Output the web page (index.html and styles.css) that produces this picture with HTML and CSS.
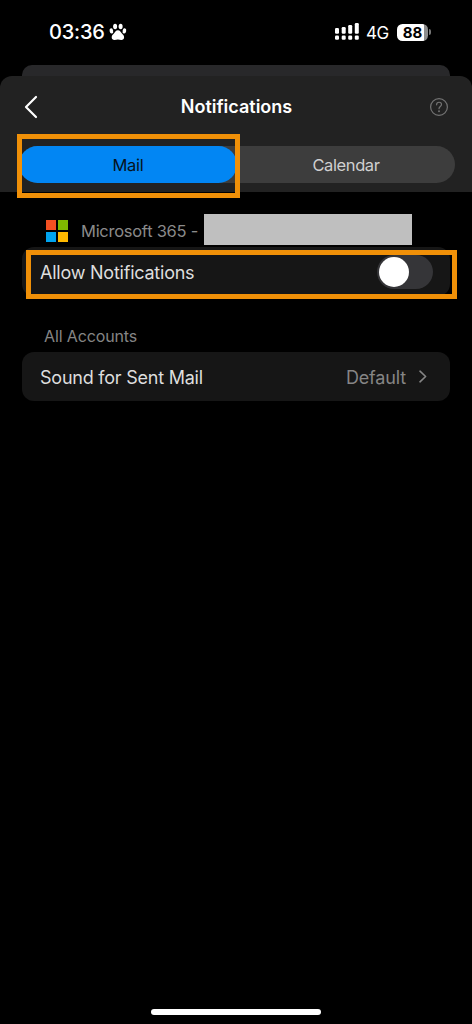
FILE: index.html
```html
<!DOCTYPE html>
<html lang="en">
<head>
<meta charset="utf-8">
<title>Notifications</title>
<link rel="stylesheet" href="styles.css">
</head>
<body>
<div class="phone">
  <div class="status">
    <span class="time">03:36</span>
    <svg class="paw" width="18" height="18" viewBox="0 0 18 18" fill="#fff">
      <ellipse cx="6.1" cy="3.5" rx="2" ry="2.8"/><ellipse cx="11.6" cy="3.5" rx="2" ry="2.8"/>
      <ellipse cx="2.4" cy="7.9" rx="1.8" ry="2.6" transform="rotate(-12 2.4 7.9)"/><ellipse cx="15.4" cy="7.9" rx="1.8" ry="2.6" transform="rotate(12 15.4 7.9)"/>
      <path d="M8.900 7.200c2.100 0 2.700 1.700 3.800 3 1.200 1.300 2.400 2.200 2.400 4 0 1.900-1.300 2.900-2.900 2.800-1.200-.1-2.100-.5-3.300-.5s-2.100.4-3.300.5c-1.600.1-2.900-.9-2.900-2.800 0-1.800 1.200-2.700 2.400-4 1.100-1.300 1.700-3 3.800-3z"/>
    </svg>
    <svg class="signal" width="26" height="18" viewBox="0 0 26 18" fill="#fff">
      <rect x="1" y="5" width="4" height="5.700" rx="1.200"/><rect x="7.700" y="4" width="4" height="6.700" rx="1.200"/><rect x="14.200" y="2" width="4" height="8.700" rx="1.200"/><rect x="20.800" y="0" width="4" height="10.700" rx="1.200"/>
      <rect x="1" y="12.600" width="4" height="4.200" rx="1.200"/><rect x="7.700" y="12.600" width="4" height="4.200" rx="1.200"/><rect x="14.200" y="12.600" width="4" height="4.200" rx="1.200"/><rect x="20.800" y="12.600" width="4" height="4.200" rx="1.200"/>
    </svg>
    <span class="network">4G</span>
    <span class="battery">88</span>
    <span class="battery-tip"></span>
  </div>
  <div class="back-sheet"></div>
  <div class="sheet">
    <div class="header">
      <svg class="back" width="14" height="24" viewBox="0 0 14 24" fill="none" stroke="#fff" stroke-width="2.200" stroke-linecap="round" stroke-linejoin="round"><path d="M12 2 2 12 12 22"/></svg>
      <h1 class="title">Notifications</h1>
      <svg class="help" width="20" height="20" viewBox="0 0 20 20" fill="none" stroke="#737373" stroke-width="1.200" stroke-linecap="round"><circle cx="10" cy="10" r="8.400"/><path d="M7.600 7.800c0-3.400 4.900-3.300 4.900-.3 0 2-2.500 2.100-2.500 4.200"/><circle cx="10" cy="14.300" r=".4" fill="#737373"/></svg>
    </div>
    <div class="tabs">
      <div class="tab selected">Mail</div>
      <div class="tab">Calendar</div>
    </div>
  </div>
  <div class="account">
    <div class="logo"><i class="red"></i><i class="green"></i><i class="blue"></i><i class="yellow"></i></div>
    <span class="account-name">Microsoft 365 -</span>
    <div class="redacted"></div>
  </div>
  <div class="row"><span class="label">Allow Notifications</span><div class="switch"><div class="knob"></div></div></div>
  <div class="section">All Accounts</div>
  <div class="row"><span class="label">Sound for Sent Mail</span><div class="value"><span class="current">Default</span>
    <svg width="8" height="13" viewBox="0 0 8 13" fill="none" stroke="#858585" stroke-width="1.600" stroke-linecap="round" stroke-linejoin="round"><path d="M1 1.200 6.600 6.500 1 11.800"/></svg></div></div>
  <div class="home"></div>
  <div class="mark mark-tab"></div>
  <div class="mark mark-row"></div>
</div>
</body>
</html>
```
FILE: styles.css
```css
* { box-sizing: border-box; }
body { margin: 0; background: #000; font-family: Inter, "Liberation Sans", sans-serif; }
.phone { position: relative; width: 472px; height: 1024px; display: flex; flex-direction: column; overflow: hidden; background: #000; color: #dedede; white-space: nowrap; }
.status { height: 65px; flex: none; display: flex; align-items: center; padding: 0 41px 1px 49px; color: #fff; }
.time { width: 60px; font-size: 20px; font-weight: 500; letter-spacing: -.2px; }
.paw { flex: none; }
.signal { margin-left: auto; flex: none; }
.network { width: 31px; padding-left: 6px; padding-top: 1px; font-size: 17px; letter-spacing: -.5px; }
.battery { width: 31px; height: 17px; border-radius: 5.500px; margin-left: 6px; background: linear-gradient(90deg, #fff 27px, #8d8d8d 27px); color: #000; font-size: 15px; font-weight: 700; line-height: 17px; text-align: center; }
.battery-tip { width: 2px; height: 6px; margin-left: 1px; border-radius: 0 2px 2px 0; background: #777; }
.back-sheet { height: 11px; flex: none; margin: 0 22px; border-radius: 10px 10px 0 0; background: #28282a; }
.sheet { height: 116px; flex: none; border-radius: 12px 12px 0 0; background: #222; }
.header { height: 70px; padding: 0 23px 9px 24px; display: flex; align-items: center; }
.back { margin-right: 6px; }
.title { flex: 1; margin: 0; text-align: center; color: #fff; font-size: 18px; font-weight: 600; }
.tabs { width: 436px; height: 37px; margin-left: 19px; display: flex; border-radius: 19px; background: #3d3d3d; }
.tab { flex: 1; display: flex; align-items: center; justify-content: center; color: #d0d0d0; font-size: 16.500px; letter-spacing: -.4px; border-radius: 19px; }
.selected { background: #0286f3; color: #07131d; letter-spacing: -.3px; }
.account { height: 55px; flex: none; display: flex; align-items: flex-start; padding: 22px 0 0 46px; }
.logo { display: grid; grid-template-columns: 10px 10px; grid-auto-rows: 10px; gap: 2px; margin-top: 6px; }
.red { background: #f25022; }
.green { background: #7fba00; }
.blue { background: #00a4ef; }
.yellow { background: #ffb900; }
.account-name { width: 123px; margin-left: 13px; color: #8a8a8a; font-size: 16.500px; letter-spacing: -.27px; line-height: 34px; }
.redacted { width: 208px; height: 31px; background: #bfbfbf; }
.row { height: 49px; flex: none; margin: 0 22px; padding: 0 18px; display: flex; align-items: center; justify-content: space-between; border-radius: 12px; background: #161616; font-size: 18px; }
.label { letter-spacing: -.23px; padding-top: 2px; }
.switch { width: 56px; height: 34px; margin-right: -1px; padding: 2px; border-radius: 17px; background: #353538; }
.knob { width: 30px; height: 30px; border-radius: 50%; background: #fff; }
.section { height: 56px; flex: none; padding: 30px 0 0 44px; font-size: 16px; letter-spacing: -.13px; line-height: 20px; color: #858585; }
.value { display: flex; align-items: center; gap: 13px; margin-right: 5px; color: #858585; }
.current { padding-top: 2px; letter-spacing: -.15px; }
.home { width: 170px; height: 6px; margin: auto auto 9px 151px; border-radius: 3px; background: #fff; }
.mark { position: absolute; border: 5px solid #f09008; }
.mark-tab { left: 17px; top: 134px; width: 223px; height: 64px; }
.mark-row { left: 26px; top: 250px; width: 431px; height: 49px; }
```
